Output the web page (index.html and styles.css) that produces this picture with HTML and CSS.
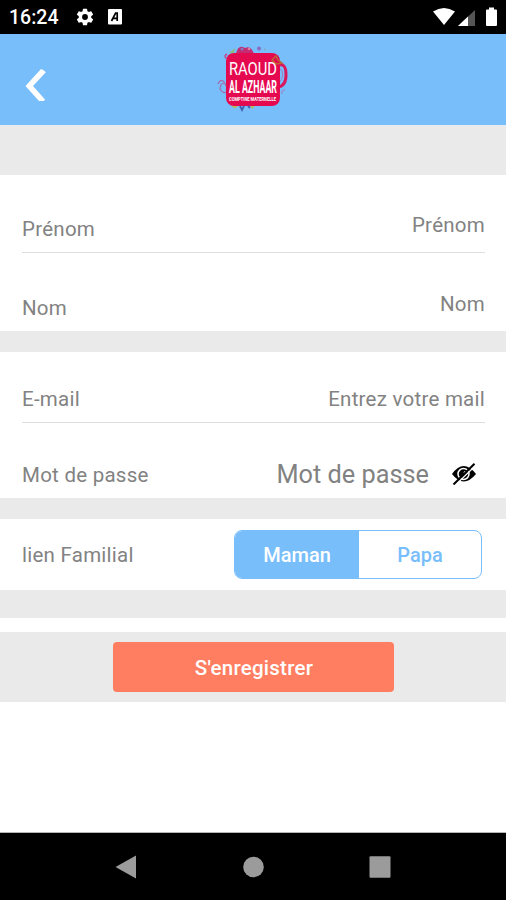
FILE: index.html
```html
<!DOCTYPE html>
<html lang="fr">
<head>
<meta charset="utf-8">
<title>Inscription</title>
<link rel="stylesheet" href="styles.css">
</head>
<body>
<header class="status">
  <span class="clock">16:24</span>
  <svg class="gear" width="20" height="20" viewBox="0 0 24 24"><path fill="#fff" d="M19.43 12.98c.04-.32.07-.64.07-.98s-.03-.66-.07-.98l2.11-1.65a.5.5 0 0 0 .12-.64l-2-3.46a.5.5 0 0 0-.61-.22l-2.49 1a7.3 7.3 0 0 0-1.69-.98l-.38-2.65A.49.49 0 0 0 14 2h-4a.49.49 0 0 0-.49.42l-.38 2.65c-.61.25-1.17.59-1.69.98l-2.49-1a.5.5 0 0 0-.61.22l-2 3.46a.5.5 0 0 0 .12.64l2.11 1.65c-.04.32-.07.65-.07.98s.03.66.07.98l-2.11 1.65a.5.5 0 0 0-.12.64l2 3.46c.12.22.39.3.61.22l2.49-1c.52.4 1.08.73 1.69.98l.38 2.65c.03.24.24.42.49.42h4c.25 0 .46-.18.49-.42l.38-2.65c.61-.25 1.17-.59 1.69-.98l2.49 1c.23.09.49 0 .61-.22l2-3.46a.5.5 0 0 0-.12-.64zM12 15.5a3.5 3.5 0 1 1 0-7 3.5 3.5 0 0 1 0 7z"/></svg>
  <svg class="square-a" width="14" height="16" viewBox="0 0 14 16"><rect width="14" height="15.500" rx="1" fill="#fff"/><path d="M3.500 12 7.600 4h1.600v8M5 9.300h4" fill="none" stroke="#000" stroke-width="1.700"/></svg>
  <svg class="signals" width="66" height="20" viewBox="0 0 66 20"><path fill="#fff" d="M0 4.500Q11-2.500 22 4.500L11 18z"/><path fill="#555" d="M42 3v16H25z"/><path fill="#fff" d="M35 9.600v9.400H25z"/><path fill="#fff" d="M54 2.500h2V.500h5v2h2q1 0 1 1V18q0 1-1 1h-9q-1 0-1-1V3.500q0-1 1-1z"/></svg>
</header>
<nav class="topbar">
  <svg class="back" width="24" height="34" viewBox="0 0 24 34"><path d="M1.500 18 17 1q3 1 4.800 3.200L9 18 21 31.500q-.5 1.500-2 1.500h-4z" fill="#fff"/></svg>
  <svg class="logo" width="72" height="68" viewBox="0 0 72 68">
    <path d="M61 21q7-2 7 10 0 11-8 12" fill="none" stroke="#d9185e" stroke-width="3"/>
    <path d="M62 25q3 1 2.500 7-.5 4-3 6M64 50q-1-4 3-4" fill="none" stroke="#a07bc0" stroke-width="1"/>
    <path d="M18 10Q20 0 27 4q6-3 9 6z" fill="#c42b72"/>
    <circle cx="24" cy="5" r="1.500" fill="#8577bd"/><circle cx="31" cy="5" r="1.300" fill="#e27ba1"/><circle cx="41" cy="4.500" r="2" fill="#8b6bbf"/><circle cx="47" cy="5.500" r="1" fill="#7fa8c8"/>
    <path d="m11 9 6-5-1 5z" fill="#86bf83"/>
    <rect x="8" y="9" width="54" height="53" rx="8" fill="#e5094f"/>
    <path d="m54 16 4-4 2 4 4 3-6 1z" fill="none" stroke="#bd6536" stroke-width="1.500"/>
    <path d="M9 15q-4-3 0-5" fill="none" stroke="#be4d91" stroke-width="1.500"/>
    <path d="M8 42Q4 32 0 40m7-1q-5 0-5 6 3 5 6 3" fill="none" stroke="#a568a8" stroke-width="1.200"/>
    <path d="M13 62h7l-3 2.500zM32 62h5l-3 3z" fill="#b5b95a"/>
    <path d="m22 62 2 4 2-4m4 0 2 2" fill="none" stroke="#425fae" stroke-width="1.800"/>
    <text class="logo-big" x="11" y="31" textLength="48" lengthAdjust="spacingAndGlyphs">RAOUD</text>
    <text class="logo-mid" x="11" y="48.500" textLength="48" lengthAdjust="spacingAndGlyphs">AL AZHAAR</text>
    <text class="logo-small" x="11" y="56.500" textLength="47" lengthAdjust="spacingAndGlyphs">COMPTINE MATERNELLE</text>
  </svg>
</nav>
<main class="form">
  <section class="group names">
    <div class="row lined"><span>Prénom</span><span class="raised">Prénom</span></div>
    <div class="row"><span>Nom</span><span class="raised">Nom</span></div>
  </section>
  <section class="group account">
    <div class="row lined"><span>E-mail</span><span>Entrez votre mail</span></div>
    <div class="row"><span>Mot de passe</span>
      <span class="password"><span class="large">Mot de passe</span>
      <svg class="eye" width="26" height="22" viewBox="0 0 26 22"><path d="M1 11Q12.500-5 25 11 12.500 26 1 11z"/><circle cx="12.500" cy="11" r="5.500" fill="none" stroke="#fff" stroke-width="1.500"/><circle cx="14" cy="9.500" r="1.300" fill="#fff"/><path d="M4.500 22 24 3" stroke="#fff" stroke-width="1.300"/><path d="M2.500 21.500 23.500.700" stroke="#000" stroke-width="2"/></svg></span>
    </div>
  </section>
  <section class="group family">
    <span>lien Familial</span>
    <div class="segments"><span class="segment active">Maman</span><span class="segment">Papa</span></div>
  </section>
  <div class="spacer"></div>
  <div class="actions"><button class="submit">S'enregistrer</button></div>
</main>
<footer class="navbar">
  <svg width="22" height="24" viewBox="0 0 22 24"><path d="M.500 12 21 .500v23z"/></svg>
  <svg width="22" height="24" viewBox="0 0 22 24"><circle cx="11.500" cy="12" r="10.300"/></svg>
  <svg width="22" height="24" viewBox="0 0 22 24"><rect x=".500" y="1.300" width="21" height="21.400" rx="1"/></svg>
</footer>
</body>
</html>
```
FILE: styles.css
```css
* { box-sizing: border-box; }
body {
  margin: 0;
  width: 506px;
  height: 900px;
  display: flex;
  flex-direction: column;
  background: #fff;
  color: #828282;
  font: 20.5px/24px Roboto, sans-serif;
  letter-spacing: .25px;
  overflow: hidden;
}
svg { display: block; flex: none; }
.status {
  height: 34px;
  background: #000;
  color: #fff;
  display: flex;
  align-items: center;
  padding: 0 8px 0 9px;
}
.clock { width: 66px; font-size: 19.5px; font-weight: 500; letter-spacing: 0; padding-top: 2px; }
.square-a { margin-left: 13px; }
.signals { margin-left: auto; margin-right: -1px; }
.topbar {
  height: 91px;
  background: #78befb;
  display: flex;
  align-items: flex-start;
}
.back { margin: 34px 0 0 24px; }
.logo { margin: 10px 0 0 170px; overflow: visible; }
.logo-big, .logo-mid, .logo-small { fill: #fff; font-family: Roboto, sans-serif; letter-spacing: 0; }
.logo-big { font-size: 18px; }
.logo-mid { font-size: 18.5px; font-weight: 700; }
.logo-small { font-size: 5px; font-weight: 700; }
.form {
  display: flex;
  flex-direction: column;
  background: #eaeaea;
  padding-top: 50px;
}
.group { background: #fff; margin-bottom: 21px; }
.names { height: 156px; display: grid; grid-template-rows: 1fr 1fr; padding: 0 21px 0 22px; }
.account { height: 146px; display: grid; grid-template-rows: 71px 75px; padding: 0 21px 0 22px; }
.row {
  display: flex;
  justify-content: space-between;
  align-items: flex-end;
  padding-bottom: 11px;
}
.lined { border-bottom: 1px solid #dedede; }
.raised { margin-bottom: 4px; }
.password { display: flex; align-items: center; gap: 22px; padding-right: 8px; }
.large { font-size: 25.3px; letter-spacing: 0; }
.eye { margin-top: -2px; }
.family {
  height: 71px;
  margin-bottom: 28px;
  padding: 0 24px 0 22px;
  display: flex;
  align-items: center;
  justify-content: space-between;
}
.segments {
  width: 248px;
  height: 49px;
  display: grid;
  grid-template-columns: 124px 1fr;
  border: 1px solid #78befb;
  border-radius: 8px;
  overflow: hidden;
}
.segment {
  display: flex;
  align-items: center;
  justify-content: center;
  color: #78befb;
  font-size: 20px;
  font-weight: 500;
  letter-spacing: 0;
}
.active { background: #78befb; color: #fff; }
.spacer { height: 14px; background: #fff; }
.actions { height: 70px; padding: 10px 0 0 113px; }
.submit {
  display: block;
  width: 281px;
  height: 50px;
  padding: 2px 0 0 1px;
  border: 0;
  border-radius: 4px;
  background: #ff7e61;
  color: #fff;
  font: 500 20.5px/24px Roboto, sans-serif;
  letter-spacing: .25px;
}
.navbar {
  height: 68px;
  margin-top: auto;
  border-top: 1px solid #b5b5b5;
  background: #000;
  display: flex;
  align-items: center;
  justify-content: space-between;
  padding: 0 115px;
  fill: #9b9b9b;
}
```
